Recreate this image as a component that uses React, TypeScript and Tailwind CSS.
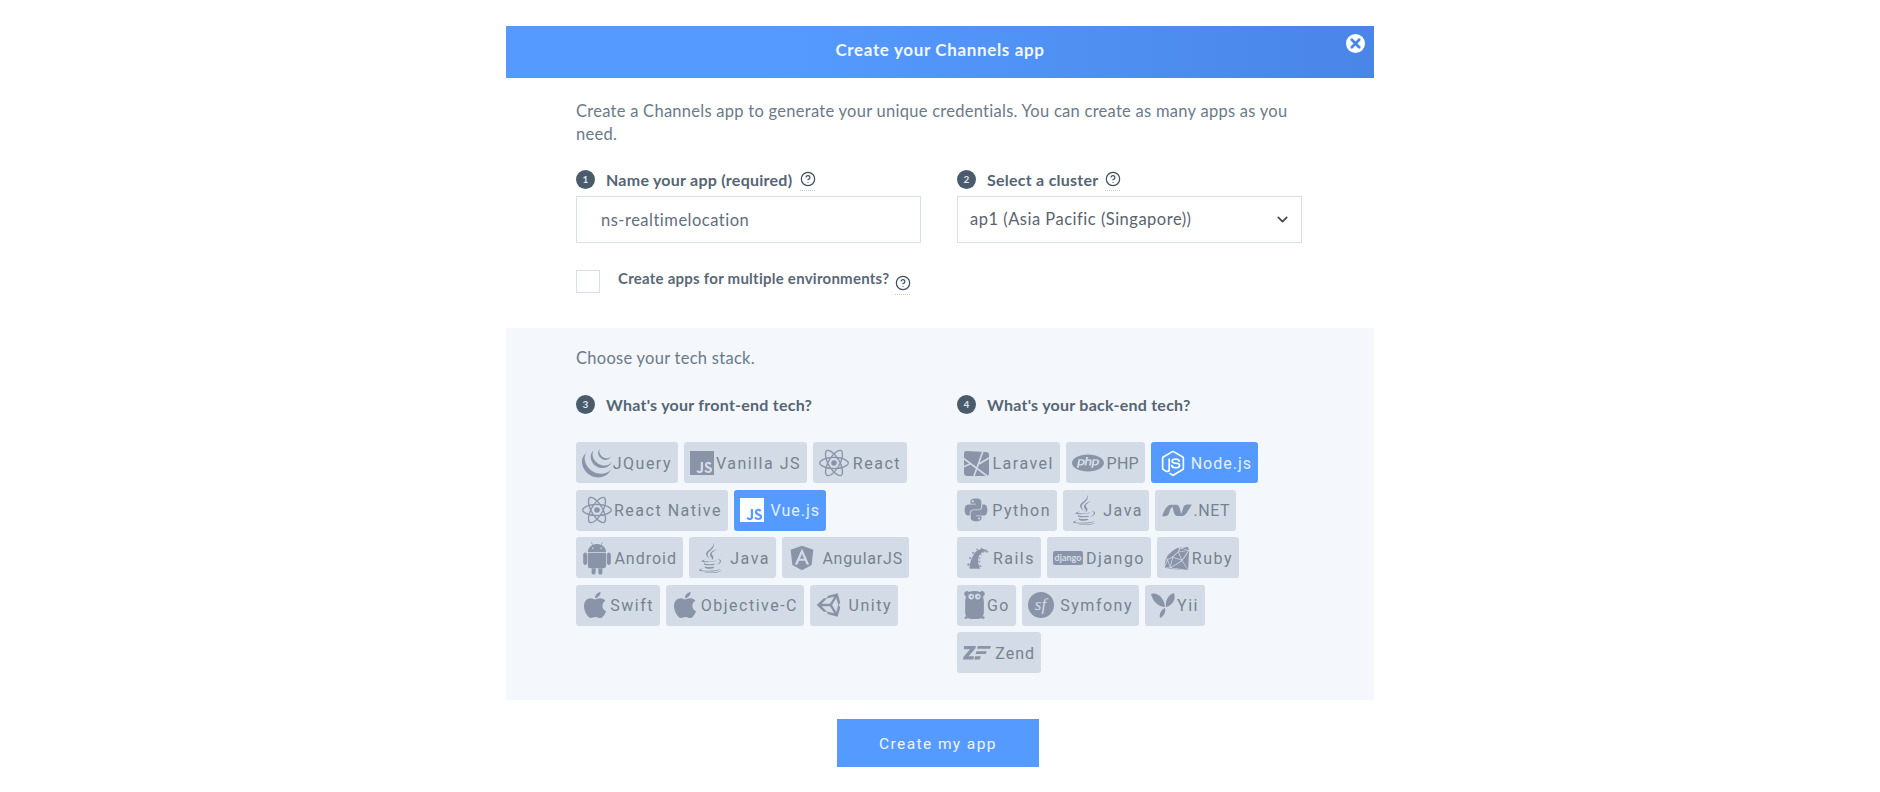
import { CircleHelp, ChevronDown } from 'lucide-react';
import { FaAngular, FaApple, FaJava, FaPython, FaUnity } from 'react-icons/fa';
import { SiJavascript, SiJquery, SiPhp, SiReact } from 'react-icons/si';
import { DiAndroid, DiDotnet, DiNodejsSmall, DiRor, DiRuby } from 'react-icons/di';

function DjangoIcon() {
    return (
        <span className="flex h-[14px] w-[30px] items-center justify-center rounded-[2px] bg-[#8a94a8] text-[9px] leading-none font-bold text-[#d3dce6]">
            django
        </span>
    );
}

function LaravelIcon({ className }: { className?: string }) {
    return (
        <svg viewBox="0 0 26 26" className={className}>
            <path d="M3 1l20 1q3 0 3 3v18q0 3-3 3H4q-3 0-3-3V4q0-3 2-3z" fill="currentColor" />
            <path d="M0 8l24 18M20 1l-9 25M0 17l7-3M16 14l10-6" stroke="#d3dce6" strokeWidth="1.6" fill="none" />
        </svg>
    );
}

function GopherIcon({ className }: { className?: string }) {
    return (
        <svg viewBox="0 0 24 32" className={className} fill="currentColor">
            <path d="M1 4a3 3 0 0 1 5-2q6-2 12 0a3 3 0 0 1 5 2q0 2-2 3 1 3 1 6v10q0 3-1 5l2 1-1 2-3-1q-7 2-14 0l-3 1-1-2 2-1q-1-2-1-5V13q0-3 1-6-2-1-2-3z" />
            <circle cx="8.500" cy="7" r="3" fill="#d3dce6" />
            <circle cx="15.500" cy="7" r="3" fill="#d3dce6" />
            <circle cx="9" cy="7" r="1.200" />
            <circle cx="16" cy="7" r="1.200" />
        </svg>
    );
}

function SymfonyIcon({ className }: { className?: string }) {
    return (
        <svg viewBox="0 0 26 26" className={className}>
            <circle cx="13" cy="13" r="13" fill="currentColor" />
            <text x="12.500" y="18" textAnchor="middle" fontFamily="'Liberation Serif',serif" fontStyle="italic" fontSize="17" fill="#d3dce6">
                sf
            </text>
        </svg>
    );
}

function YiiIcon({ className }: { className?: string }) {
    return (
        <svg viewBox="0 0 24 26" className={className} fill="currentColor">
            <path d="M0 2c6-2 13 3 14 13C8 15 2 10 0 2z" />
            <path d="M23 1c2 6-1 12-8 14-1-6 2-12 8-14z" />
            <path d="M14 16c1 4-1 8-5 10-1-4 1-8 5-10z" />
        </svg>
    );
}

function ZendIcon({ className }: { className?: string }) {
    return (
        <svg viewBox="0 0 30 15" className={className} fill="currentColor">
            <path d="M1 0h13l-1 3-7 8h6l-1 3.500H0l.6-3 7-8H1z" />
            <path d="M16 0h14l-1 3H15zM14.500 5.500h11l-1 3h-11zM13 11h6l-1 3.500h-6z" />
        </svg>
    );
}

type Tech = { name: string; w: string; icon: React.ReactNode; active?: boolean; label?: string };

const ic = 'text-[#8a94a8]';

const frontEnd: Tech[] = [
    { name: 'JQuery', w: 'w-[102px]', icon: <SiJquery className={`${ic} h-[30px] w-[30px]`} /> },
    { name: 'Vanilla JS', w: 'w-[123px]', icon: <SiJavascript className={`${ic} h-[24px] w-[24px]`} /> },
    { name: 'React', w: 'w-[94px]', icon: <SiReact className={`${ic} h-[30px] w-[30px]`} /> },
    { name: 'React Native', w: 'w-[152px]', icon: <SiReact className={`${ic} h-[30px] w-[30px]`} /> },
    { name: 'Vue.js', w: 'w-[92px]', active: true, label: 'tracking-[1px]', icon: <SiJavascript className="h-[24px] w-[24px] text-white" /> },
    { name: 'Android', w: 'w-[107px]', label: 'tracking-[1px]', icon: <DiAndroid className={`${ic} h-[34px] w-[34px] -ml-[2px]`} /> },
    { name: 'Java', w: 'w-[87px]', icon: <FaJava className={`${ic} h-[30px] w-[30px]`} /> },
    { name: 'AngularJS', w: 'w-[127px]', label: 'tracking-[0.8px]', icon: <FaAngular className={`${ic} h-[28px] w-[28px]`} /> },
    { name: 'Swift', w: 'w-[84px]', icon: <FaApple className={`${ic} h-[30px] w-[30px] -ml-[2px]`} /> },
    { name: 'Objective-C', w: 'w-[138px]', icon: <FaApple className={`${ic} h-[30px] w-[30px] -ml-[2px]`} /> },
    { name: 'Unity', w: 'w-[88px]', icon: <FaUnity className={`${ic} h-[28px] w-[28px]`} /> },
];

const backEnd: Tech[] = [
    { name: 'Laravel', w: 'w-[103px]', icon: <LaravelIcon className={`${ic} h-[26px] w-[26px]`} /> },
    { name: 'PHP', w: 'w-[79px]', label: 'tracking-[0.3px]', icon: <SiPhp className={`${ic} h-[32px] w-[32px]`} /> },
    { name: 'Node.js', w: 'w-[107px]', active: true, label: 'tracking-[1px]', icon: <DiNodejsSmall className="h-[32px] w-[32px] text-white" /> },
    { name: 'Python', w: 'w-[100px]', icon: <FaPython className={`${ic} h-[26px] w-[26px]`} /> },
    { name: 'Java', w: 'w-[86px]', icon: <FaJava className={`${ic} h-[30px] w-[30px]`} /> },
    { name: '.NET', w: 'w-[81px]', label: 'tracking-[0.5px]', icon: <DiDotnet className={`${ic} h-[32px] w-[32px]`} /> },
    { name: 'Rails', w: 'w-[84px]', icon: <DiRor className={`${ic} h-[30px] w-[30px]`} /> },
    { name: 'Django', w: 'w-[104px]', icon: <DjangoIcon /> },
    { name: 'Ruby', w: 'w-[82px]', icon: <DiRuby className={`${ic} h-[28px] w-[28px]`} /> },
    { name: 'Go', w: 'w-[59px]', icon: <GopherIcon className={`${ic} h-[30px] w-[23px]`} /> },
    { name: 'Symfony', w: 'w-[117px]', icon: <SymfonyIcon className={`${ic} h-[26px] w-[26px]`} /> },
    { name: 'Yii', w: 'w-[60px]', icon: <YiiIcon className={`${ic} h-[26px] w-[24px]`} /> },
    { name: 'Zend', w: 'w-[84px]', label: 'tracking-[1px]', icon: <ZendIcon className={`${ic} h-[14px] w-[28px]`} /> },
];

function TechButton({ tech }: { tech: Tech }) {
    return (
        <div
            className={`flex h-[41px] items-center justify-between rounded-[3px] px-[6px] ${tech.w} ${tech.active ? 'bg-[#559bff] text-[#e4eeff]' : 'bg-[#d3dce6] text-[#76828f]'}`}
        >
            {tech.icon}
            <span className={`pt-[2px] font-['Roboto',sans-serif] text-[16px] whitespace-pre ${tech.label ?? 'tracking-[1.5px]'}`}>{tech.name}</span>
        </div>
    );
}

function Help({ className }: { className?: string }) {
    return (
        <span className={`relative h-[15px] w-[15px] shrink-0 text-[#3f4e5c] ${className}`}>
            <CircleHelp className="h-[16px] w-[16px]" strokeWidth={1.8} />
            <span className="absolute top-[19px] left-0 h-0 w-[15px] border-b border-dotted border-[#c3c9d0]"></span>
        </span>
    );
}

function StepLabel({ n, text }: { n: number; text: string }) {
    return (
        <div className="flex h-[19px] items-center">
            <span className="flex h-[19px] w-[19px] items-center justify-center rounded-full bg-[#4a5b6c] text-[10px] font-bold text-[#dfe5ea]">{n}</span>
            <span className="ml-[11px] text-[16px] font-bold tracking-[0.25px] text-[#566574]">{text}</span>
        </div>
    );
}

export default function App() {
    return (
        <div className="min-h-[792px] bg-white pt-[26px] font-['Lato',sans-serif]">
            <div className="mx-auto w-[868px]">
                <div className="relative flex h-[52px] items-center justify-center bg-gradient-to-r from-[#559bff] from-30% to-[#4a85e8] pb-[5px] text-[17px] font-bold tracking-[0.65px] text-[#f2f7ff]">
                    Create your Channels app
                    <span className="absolute top-[8px] right-[9px] flex h-[19px] w-[19px] items-center justify-center rounded-full bg-white">
                        <svg viewBox="0 0 12 12" className="h-[11px] w-[11px]" stroke="#4a85e8" strokeWidth="3" strokeLinecap="round">
                            <path d="M2 2l8 8M10 2l-8 8" />
                        </svg>
                    </span>
                </div>

                <div className="px-[70px] pt-[22px] pb-[35px]">
                    <p className="w-[728px] text-[16.5px] leading-[23px] tracking-[0.27px] text-[#6b7a89]">
                        Create a Channels app to generate your unique credentials. You can create as many apps as you need.
                    </p>

                    <div className="mt-[24px] grid grid-cols-[345px_345px] gap-x-[36px]">
                        <div>
                            <div className="flex items-center">
                                <StepLabel n={1} text="Name your app (required)" />
                                <Help className="mb-[3px] ml-[8px]" />
                            </div>
                            <input
                                readOnly
                                value="ns-realtimelocation"
                                className="mt-[7px] h-[47px] w-[345px] border border-[#d6dfeb] pl-[24px] text-[16.5px] tracking-[0.5px] text-[#5f6e7e] outline-none"
                            />
                        </div>
                        <div>
                            <div className="flex items-center">
                                <StepLabel n={2} text="Select a cluster" />
                                <Help className="mb-[3px] ml-[6px]" />
                            </div>
                            <div className="relative mt-[7px]">
                                <select className="h-[47px] w-[345px] appearance-none border border-[#d6dfeb] bg-white pl-[12px] text-[16.5px] tracking-[0.5px] text-[#59636e] outline-none">
                                    <option>ap1 (Asia Pacific (Singapore))</option>
                                </select>
                                <ChevronDown className="absolute top-[15px] right-[11px] h-[17px] w-[17px] text-[#3f4a55]" strokeWidth={2.4} />
                            </div>
                        </div>
                    </div>

                    <div className="mt-[27px] flex h-[23px] items-start">
                        <span className="h-[23px] w-[24px] border border-[#d6dfeb] bg-white"></span>
                        <span className="ml-[18px] text-[15px] leading-[16px] font-bold tracking-[0.25px] text-[#5a6876]">Create apps for multiple environments?</span>
                        <Help className="mt-[5px] ml-[6px]" />
                    </div>
                </div>

                <div className="bg-[#f4f7fb] px-[70px] pt-[19px] pb-[27px]">
                    <p className="text-[16.5px] leading-[23px] tracking-[0.27px] text-[#6b7a89]">Choose your tech stack.</p>
                    <div className="mt-[25px] grid grid-cols-[345px_345px] gap-x-[36px]">
                        <div>
                            <StepLabel n={3} text="What's your front-end tech?" />
                            <div className="mt-[28px] flex w-[345px] flex-wrap gap-x-[6px] gap-y-[6.5px]">
                                {frontEnd.map((t) => (
                                    <TechButton key={t.name} tech={t} />
                                ))}
                            </div>
                        </div>
                        <div>
                            <StepLabel n={4} text="What's your back-end tech?" />
                            <div className="mt-[28px] flex w-[330px] flex-wrap gap-x-[6px] gap-y-[6.5px]">
                                {backEnd.map((t) => (
                                    <TechButton key={t.name} tech={t} />
                                ))}
                            </div>
                        </div>
                    </div>
                </div>

                <div className="mt-[19px] flex justify-center pr-[4px]">
                    <button className="h-[48px] w-[202px] bg-[#559bff] pt-[3px] font-['Roboto',sans-serif] text-[15.5px] tracking-[1.4px] text-[#eef4ff]">
                        Create my app
                    </button>
                </div>
            </div>
        </div>
    );
}
